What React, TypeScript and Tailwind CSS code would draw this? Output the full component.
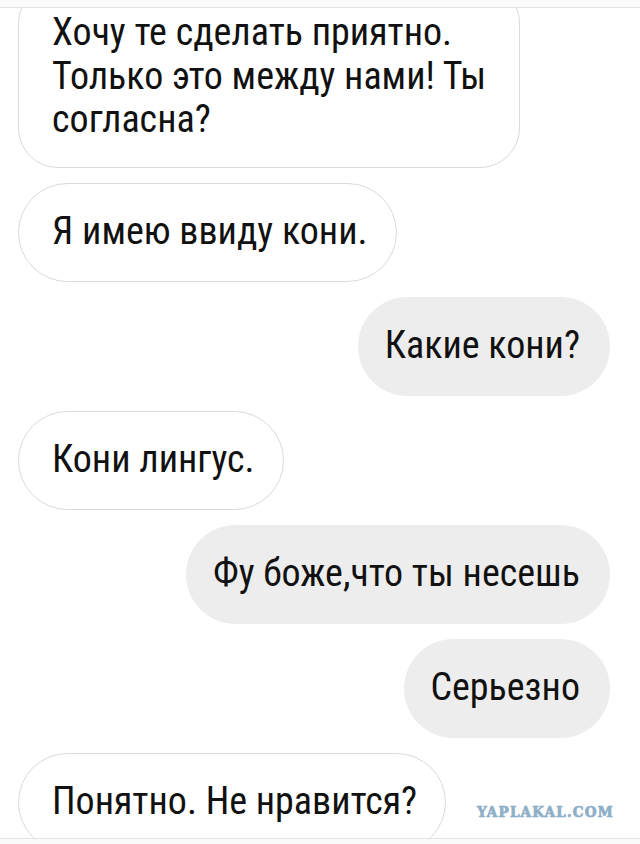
import React from "react";

function Left({ children, className = "" }: { children: React.ReactNode; className?: string }) {
  return (
    <div className="flex justify-start">
      <div
        className={`h-[99px] flex items-center rounded-full border-[1.5px] border-[#dadada] bg-white pl-[33px] pr-[28px] whitespace-nowrap ${className}`}
      >
        {children}
      </div>
    </div>
  );
}

function Right({ children }: { children: React.ReactNode }) {
  return (
    <div className="flex justify-end">
      <div className="h-[99px] flex items-center rounded-full bg-[#ededed] pl-[27px] pr-[30px] whitespace-nowrap">
        {children}
      </div>
    </div>
  );
}

export default function App() {
  return (
    <div className="w-[640px] h-[844px] bg-white overflow-hidden flex flex-col relative font-['Roboto_Condensed','Liberation_Sans_Narrow','DejaVu_Sans_Condensed',Roboto,sans-serif] font-stretch-condensed font-normal text-[38px] leading-[43.5px] text-[#111111]">
      <div className="h-[8px] shrink-0 bg-[#fbfbfb] border-b border-[#e2e2e2]" />
      <div className="flex-1 overflow-hidden flex flex-col gap-[15px] pl-[18px] pr-[30px]">
        <div className="flex justify-start -mt-[25px]">
          <div className="w-[502px] rounded-[40px] border-[1.5px] border-[#dadada] bg-white pl-[33px] pt-[27px] pb-[25px] whitespace-nowrap">
            Хочу те сделать приятно.
            <br />
            Только это между нами! Ты
            <br />
            согласна?
          </div>
        </div>
        <Left>Я имею ввиду кони.</Left>
        <Right>Какие кони?</Right>
        <Left>Кони лингус.</Left>
        <Right>Фу боже,что ты несешь</Right>
        <Right>Серьезно</Right>
        <Left>Понятно. Не нравится?</Left>
      </div>
      <div className="h-[6px] shrink-0 bg-[#fbfbfb] border-t border-[#e2e2e2]" />
      <div className="absolute left-[477px] top-[804px] text-[15px] leading-[17px] font-bold tracking-[1.2px] text-[#8eafc8] [-webkit-text-stroke:0.7px_#8eafc8] font-['DejaVu_Serif',serif]">
        YAPLAKAL.COM
      </div>
    </div>
  );
}
